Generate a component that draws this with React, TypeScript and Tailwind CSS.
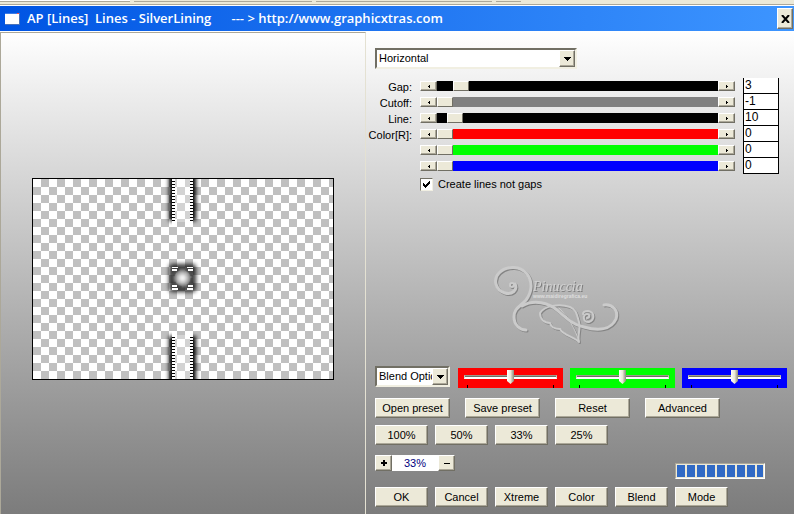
import { useState } from "react";
import clsx from "clsx";

type Channel = {
  id: string;
  label: string;
  name: string;
  min: number;
  max: number;
  value: number;
  track: string;
};

const LINE_CHANNELS: Channel[] = [
  { id: "gap", label: "Gap:", name: "Gap", min: 0, max: 50, value: 3, track: "bg-black" },
  { id: "cutoff", label: "Cutoff:", name: "Cutoff", min: -1, max: 255, value: -1, track: "bg-[#808080]" },
  { id: "line", label: "Line:", name: "Line", min: 0, max: 255, value: 10, track: "bg-black" },
];

const COLOR_CHANNELS: Channel[] = [
  { id: "red", label: "Color[R]:", name: "Red", min: 0, max: 255, value: 0, track: "bg-[#ff0000]" },
  { id: "green", label: "", name: "Green", min: 0, max: 255, value: 0, track: "bg-[#00ff00]" },
  { id: "blue", label: "", name: "Blue", min: 0, max: 255, value: 0, track: "bg-[#0000ff]" },
];

const raised =
  "bg-[#ece9d8] border border-t-white border-l-white border-r-[#716f64] border-b-[#716f64] shadow-[inset_-1px_-1px_0_#aca899]";

const PushButton = ({ label, wide }: { label: string; wide?: boolean }) => (
  <button className={clsx(raised, "h-5 leading-4", wide ? "w-[75px]" : "w-[53px]")}>
    {label}
  </button>
);

interface DropDownProps {
  label: string;
  options: string[];
  className: string;
}

const DropDown = ({ label, options, className }: DropDownProps) => (
  <div
    className={clsx(
      "relative border-2 border-t-[#716f64] border-l-[#716f64] border-r-[#f1efe2] border-b-[#f1efe2] bg-white",
      className
    )}
  >
    <select
      aria-label={label}
      className="block h-full w-full appearance-none bg-white pl-[2px] pr-4 outline-none"
    >
      {options.map((option) => (
        <option key={option}>{option}</option>
      ))}
    </select>
    <span
      className={clsx(
        raised,
        "pointer-events-none absolute inset-y-0 right-0 flex w-4 items-center justify-center"
      )}
    >
      <svg width="7" height="4" viewBox="0 0 7 4" shapeRendering="crispEdges">
        <path d="M0 0h7v1H6v1H5v1H4v1H3V3H2V2H1V1H0z" />
      </svg>
    </span>
  </div>
);

const Arrow = ({ right }: { right?: boolean }) => (
  <svg width="2" height="3" viewBox="0 0 2 3" shapeRendering="crispEdges">
    <path d={right ? "M0 0h1v1h1v1H1v1H0z" : "M2 0H1v1H0v1h1v1h1z"} />
  </svg>
);

const ChannelRow = ({ channel }: { channel: Channel }) => {
  const [value, setValue] = useState(channel.value);
  const stepButton = clsx(raised, "flex h-[10px] w-[17px] shrink-0 items-center justify-center");

  return (
    <div className="flex h-4">
      <label htmlFor={channel.id} className="flex w-[37px] shrink-0 justify-end pt-px leading-4">
        {channel.label}
      </label>
      <div className="ml-2 mt-[3px] flex h-[10px] flex-1">
        <button
          aria-label={`Decrease ${channel.name}`}
          className={stepButton}
          onClick={() => setValue(Math.max(channel.min, value - 1))}
        >
          <Arrow />
        </button>
        <input
          id={channel.id}
          aria-label={channel.name}
          type="range"
          min={channel.min}
          max={channel.max}
          value={value}
          onChange={(e) => setValue(Number(e.target.value))}
          className={clsx(
            channel.track,
            "h-[10px] min-w-0 flex-1 appearance-none outline-none",
            "[&::-webkit-slider-thumb]:h-[10px] [&::-webkit-slider-thumb]:w-4 [&::-webkit-slider-thumb]:appearance-none",
            "[&::-webkit-slider-thumb]:bg-[#ece9d8] [&::-webkit-slider-thumb]:border [&::-webkit-slider-thumb]:border-t-white [&::-webkit-slider-thumb]:border-l-white",
            "[&::-webkit-slider-thumb]:border-r-[#716f64] [&::-webkit-slider-thumb]:border-b-[#716f64]"
          )}
        />
        <button
          aria-label={`Increase ${channel.name}`}
          className={stepButton}
          onClick={() => setValue(Math.min(channel.max, value + 1))}
        >
          <Arrow right />
        </button>
      </div>
      <input
        aria-label={`${channel.name} value`}
        value={value}
        onChange={(e) => setValue(Number(e.target.value) || 0)}
        className="ml-2 h-4 w-9 border-x border-b border-black bg-white px-px pb-px text-[12px] leading-3 outline-none"
      />
    </div>
  );
};

const BlendSlider = ({ name, color }: { name: string; color: string }) => (
  <div className={clsx("h-5 w-[105px] px-1 pt-px", color)}>
    <input
      type="range"
      aria-label={`${name} blend`}
      className={clsx(
        "block h-4 w-full appearance-none bg-transparent outline-none",
        "[&::-webkit-slider-runnable-track]:mx-[2px] [&::-webkit-slider-runnable-track]:h-1 [&::-webkit-slider-runnable-track]:border [&::-webkit-slider-runnable-track]:border-b-2",
        "[&::-webkit-slider-runnable-track]:border-t-[#9d9a8c] [&::-webkit-slider-runnable-track]:border-x-[#c8c5b5] [&::-webkit-slider-runnable-track]:border-b-white [&::-webkit-slider-runnable-track]:bg-[#716f64]",
        "[&::-webkit-slider-thumb]:-mt-[6px] [&::-webkit-slider-thumb]:h-[14px] [&::-webkit-slider-thumb]:w-[7px] [&::-webkit-slider-thumb]:appearance-none",
        "[&::-webkit-slider-thumb]:bg-linear-to-r [&::-webkit-slider-thumb]:from-white [&::-webkit-slider-thumb]:via-[#ece9d8] [&::-webkit-slider-thumb]:to-[#8d8a7c]",
        "[&::-webkit-slider-thumb]:[clip-path:polygon(0_0,100%_0,100%_78%,50%_100%,0_78%)]"
      )}
    />
    <div className="flex h-[3px] justify-between px-[5px]">
      <span className="w-px bg-black" />
      <span className="w-px bg-black" />
    </div>
  </div>
);

const Preview = () => (
  <svg
    width="302"
    height="202"
    viewBox="0 0 302 202"
    role="img"
    aria-label="Preview"
    className="mx-auto block"
  >
    <defs>
      <pattern id="checker" x="1" y="1" width="16" height="16" patternUnits="userSpaceOnUse">
        <path d="M0 0h16v16H0z" fill="#fff" />
        <path d="M8 0h8v8H8zM0 8h8v8H0z" fill="#c0c0c0" />
      </pattern>
      <pattern id="teeth" x="0" y="1" width="4" height="3" patternUnits="userSpaceOnUse">
        <path d="M0 0h4v2H0z" fill="#fff" />
        <path d="M0 2h4v1H0z" fill="#000" />
      </pattern>
      <filter id="soft" x="-50%" y="-50%" width="200%" height="200%">
        <feGaussianBlur stdDeviation="2" />
      </filter>
      <clipPath id="frame">
        <path d="M1 1h300v200H1z" />
      </clipPath>
      <clipPath id="sides">
        <path d="M130 0h10v202h-10zM161 0h10v202h-10z" />
      </clipPath>
    </defs>
    <path d="M0 0h302v202H0z" />
    <path d="M1 1h300v200H1z" fill="url(#checker)" shapeRendering="crispEdges" />
    <g clipPath="url(#frame)">
      {/* Shadow falls on the outer sides of the two strips only */}
      <g clipPath="url(#sides)">
        <path d="M137 -9h27v52h-27zM137 158h27v52h-27z" filter="url(#soft)" />
      </g>
      <path d="M143 1h15v43h-15zM143 157h15v44h-15z" fill="#fff" opacity=".3" />
      <path
        d="M140 1h3v43h-3zM158 1h3v43h-3zM140 157h3v44h-3zM158 157h3v44h-3z"
        fill="url(#teeth)"
        shapeRendering="crispEdges"
      />
      <rect x="137" y="86" width="27" height="28" rx="4" opacity=".8" filter="url(#soft)" />
      <circle cx="150.500" cy="100" r="9" fill="#ddd" opacity=".7" filter="url(#soft)" />
      <circle cx="150.500" cy="100" r="4" fill="#fff" filter="url(#soft)" />
      <circle cx="150.500" cy="100" r="9" fill="none" stroke="#333" strokeWidth="2" strokeDasharray="9 6" opacity=".4" />
      <path
        d="M140 89h6v1h-6zM140 91h5v2h-5zM155 89h6v1h-6zM156 91h5v2h-5zM140 107h5v2h-5zM140 110h6v2h-6zM156 107h5v2h-5zM155 110h6v2h-6z"
        fill="#fff"
        shapeRendering="crispEdges"
      />
    </g>
  </svg>
);

const Flourish = () => (
  <g fill="none" strokeLinecap="round" strokeLinejoin="round">
    <circle cx="32" cy="31" r="2" strokeWidth="2" />
    <path
      d="M35 30C38 36 32 41 25 39C15 36 13 25 19 19C27 11 41 12 47 20C53 28 52 38 46 46C40 53 34 54 34 63C34 71 40 76 46 76"
      strokeWidth="3"
    />
    <path
      d="M42 52C54 45 69 49 77 56C86 64 93 71 104 73C118 77 131 76 136 65C139 56 132 50 124 51"
      strokeWidth="3"
    />
    <path d="M107 64C110 64 110 60 107 60C102 60 103 69 109 68C115 66 115 58 108 57C105 57 103 58 103 60" strokeWidth="2" />
    <path
      d="M60 59C64 52 79 49 90 53C97 56 97 62 99 68C101 75 97 81 99 88C93 82 84 82 80 75M60 59C60 65 64 69 70 69C71 73 75 75 80 75"
      strokeWidth="2"
    />
    <path d="M79 54C88 62 95 75 99 87" strokeWidth="1" />
  </g>
);

const Watermark = () => (
  <svg
    width="150"
    height="100"
    viewBox="0 0 150 100"
    role="img"
    aria-label="Pinuccia"
    className="shrink-0"
  >
    <g stroke="#848484" transform="translate(1 1)">
      <Flourish />
    </g>
    <g stroke="#cbcbcb">
      <Flourish />
    </g>
    <text
      x="53"
      y="37"
      fontSize="14"
      fontFamily="Liberation Serif, serif"
      fontStyle="italic"
      fill="#d2d2d2"
      className="drop-shadow-[1px_1px_0_#7c7c7c]"
    >
      Pinuccia
    </text>
    <text
      x="53"
      y="44"
      fontSize="5"
      fontFamily="Liberation Sans, sans-serif"
      fontWeight="bold"
      fill="#dedede"
    >
      www.maidiregrafica.eu
    </text>
  </svg>
);

const TitleBar = () => (
  <header className="flex h-[25px] items-center bg-linear-to-r from-[#0054e3] to-[#3d95ff] pl-[5px] pr-px">
    <svg width="15" height="12" viewBox="0 0 15 12" shapeRendering="crispEdges">
      <path d="M0 0h15v12H0z" fill="#fff" />
      <path d="M0 0h15v1H0z" fill="#3a7be8" />
      <path d="M12 0h2v1h-2z" fill="#f05050" />
      <path d="M14 1h1v11H0v-1h14z" fill="#4a72b8" />
    </svg>
    <h1 className="ml-[7px] flex-1 whitespace-pre font-['Open_Sans',sans-serif] text-[13px] font-semibold text-white">
      {"AP [Lines]  Lines - SilverLining      --- > http://www.graphicxtras.com"}
    </h1>
    <button aria-label="Close" className={clsx(raised, "flex h-[21px] w-4 items-center justify-center")}>
      <svg width="9" height="8" viewBox="0 0 9 8">
        <path d="M1 0l7 8M8 0L1 8" stroke="#000" strokeWidth="2" />
      </svg>
    </button>
  </header>
);

const App = () => {
  return (
    <div className="flex min-h-screen flex-col bg-[#ece9d8] font-['Liberation_Sans',Arial,sans-serif] text-[11px] text-black">
      {/* Edge of the window behind */}
      <div className="flex h-1 gap-1">
        <span className="h-[2px] w-[130px] border-b border-[#aca899] bg-white" />
        <span className="h-[2px] w-[178px] border-b border-[#aca899]" />
        <span className="h-[2px] w-[176px] border-b border-[#aca899]" />
        <span className="h-[2px] w-[25px] border-b border-[#aca899]" />
      </div>
      <div className="h-[2px] border-t border-[#aca899] bg-white" />
      <TitleBar />
      <main className="flex flex-1 bg-linear-to-b from-white to-[#7c7c7c]">
        <section className="mt-px w-[366px] shrink-0 border-x border-t border-t-[#aca899] border-l-[#aca899] border-r-[#e4e1d2] pt-[145px]">
          <Preview />
        </section>

        <section className="flex flex-1 flex-col pl-[9px] pr-[6px]">
          <DropDown
            label="Direction"
            options={["Horizontal", "Vertical"]}
            className="mt-[17px] h-[21px] w-[202px]"
          />

          {/* Line settings */}
          <div className="mr-[9px] mt-[9px]">
            {LINE_CHANNELS.map((channel) => (
              <ChannelRow key={channel.id} channel={channel} />
            ))}
            {COLOR_CHANNELS.map((channel) => (
              <ChannelRow key={channel.id} channel={channel} />
            ))}
          </div>
          <div className="ml-[45px] mt-[2px] flex items-center gap-[5px] leading-4">
            <span className="relative flex">
              <input
                id="create-lines"
                type="checkbox"
                defaultChecked
                className="peer h-[13px] w-[13px] appearance-none border border-t-[#716f64] border-l-[#716f64] border-r-[#f1efe2] border-b-[#f1efe2] bg-white"
              />
              <svg
                width="7"
                height="7"
                viewBox="0 0 7 7"
                shapeRendering="crispEdges"
                className="pointer-events-none invisible absolute left-[3px] top-[3px] peer-checked:visible"
              >
                <path d="M0 2h1v1h1v1h1V3h1V2h1V1h1V0h1v3H6v1H5v1H4v1H3v1H2V6H1V5H0z" />
              </svg>
            </span>
            <label htmlFor="create-lines">Create lines not gaps</label>
          </div>

          <div className="flex flex-1 pl-[105px] pt-[62px]">
            <Watermark />
          </div>

          {/* Blend */}
          <div className="flex items-start">
            <DropDown label="Blend options" options={["Blend Options"]} className="h-[21px] w-[75px]" />
            <div className="ml-2 mt-[2px] flex flex-1 gap-[7px]">
              <BlendSlider name="Red" color="bg-[#ff0000]" />
              <BlendSlider name="Green" color="bg-[#00ff00]" />
              <BlendSlider name="Blue" color="bg-[#0000ff]" />
            </div>
          </div>

          <div className="mt-[10px] flex gap-[15px]">
            <PushButton wide label="Open preset" />
            <PushButton wide label="Save preset" />
            <PushButton wide label="Reset" />
            <PushButton wide label="Advanced" />
          </div>
          <div className="mt-[7px] flex gap-[7px]">
            <PushButton label="100%" />
            <PushButton label="50%" />
            <PushButton label="33%" />
            <PushButton label="25%" />
          </div>

          <div className="mt-[10px] flex">
            <button
              aria-label="Zoom in"
              className={clsx(raised, "flex h-4 w-[17px] items-center justify-center")}
            >
              <svg width="6" height="6" viewBox="0 0 6 6" shapeRendering="crispEdges">
                <path d="M2 0h2v2h2v2H4v2H2V4H0V2h2z" />
              </svg>
            </button>
            <input
              aria-label="Zoom"
              defaultValue="33%"
              className="h-4 w-[46px] bg-white text-center text-[#000080] outline-none"
            />
            <button
              aria-label="Zoom out"
              className={clsx(raised, "flex h-4 w-[17px] items-center justify-center")}
            >
              <svg width="6" height="1" viewBox="0 0 6 1" shapeRendering="crispEdges">
                <path d="M0 0h6v1H0z" />
              </svg>
            </button>
            <div
              role="progressbar"
              aria-label="Rendering"
              aria-valuenow={100}
              className="ml-[220px] mt-2 flex h-4 w-[90px] gap-[2px] border border-t-[#aca899] border-l-[#aca899] border-r-white border-b-white bg-[#ece9d8] p-px"
            >
              {Array.from({ length: 9 }, (_, i) => (
                <span key={i} className={clsx("h-full bg-[#316ac5]", i < 8 ? "w-2" : "w-[6px]")} />
              ))}
            </div>
          </div>

          <div className="mb-[7px] mt-2 flex gap-[7px]">
            <PushButton label="OK" />
            <PushButton label="Cancel" />
            <PushButton label="Xtreme" />
            <PushButton label="Color" />
            <PushButton label="Blend" />
            <PushButton label="Mode" />
          </div>
        </section>
      </main>
    </div>
  );
};

export default App;
